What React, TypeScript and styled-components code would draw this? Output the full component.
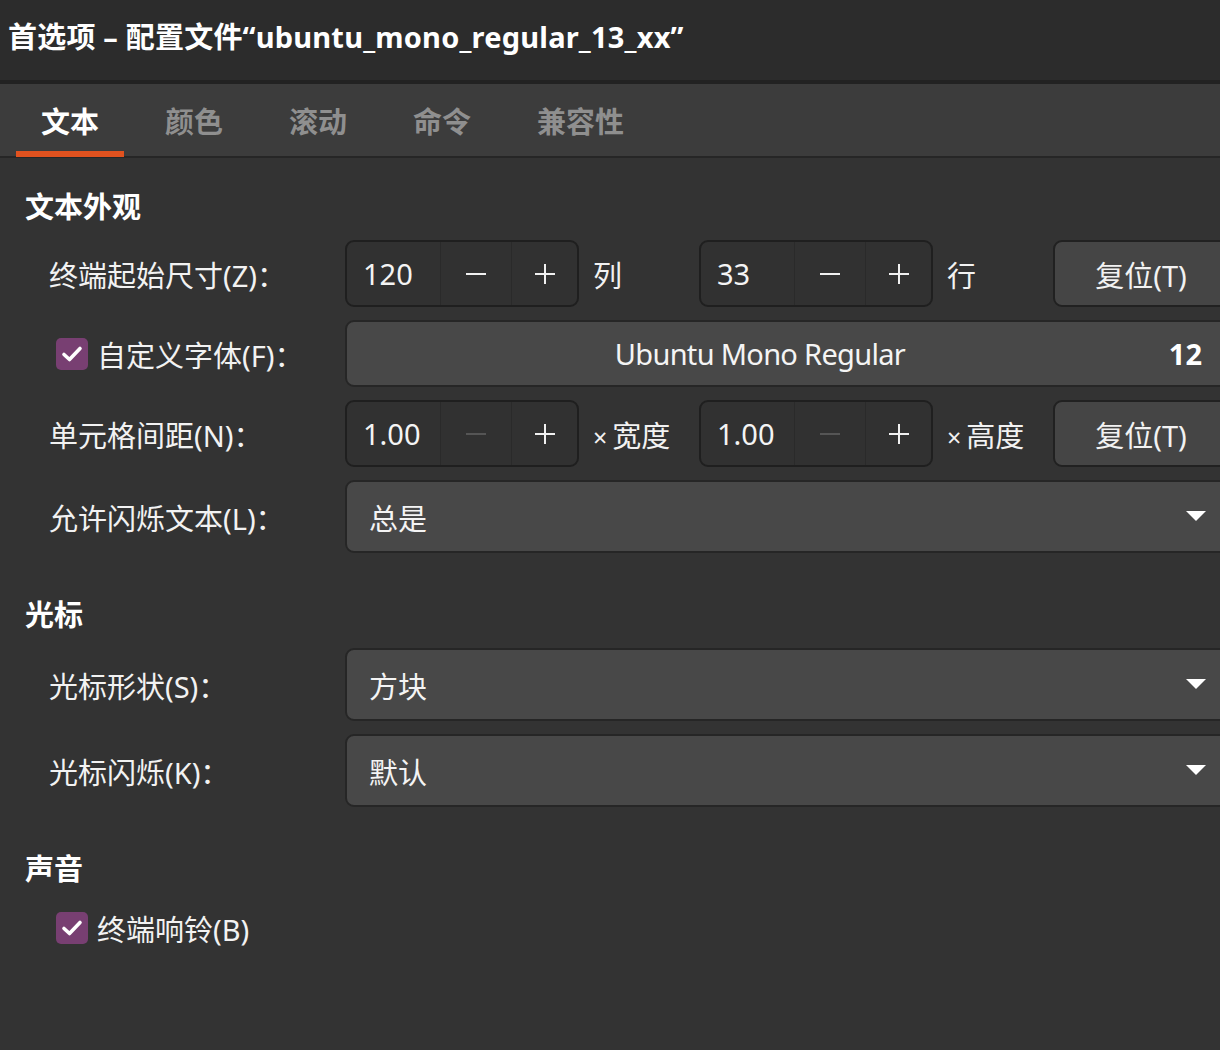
import React from "react";
import styled, { createGlobalStyle } from "styled-components";

const GlobalStyle = createGlobalStyle`
  html, body {
    margin: 0;
    padding: 0;
    background: #333333;
    overflow: hidden;
  }
  body {
    font-family: "Noto Sans", "Noto Sans CJK SC", sans-serif;
    color: #f2f2f2;
  }
  * { box-sizing: border-box; }
`;

const Window = styled.div`
  width: 1220px;
  height: 1050px;
  overflow: hidden;
  display: flex;
  flex-direction: column;
  background: #333333;
`;

const TitleBar = styled.header`
  height: 84px;
  flex: none;
  background: #2c2c2c;
  border-bottom: 4px solid #222222;
  display: flex;
  align-items: center;
  padding: 0 0 11px 8px;
  font-size: 29px;
  font-weight: 700;
  letter-spacing: 0.2px;
  color: #ffffff;
  white-space: nowrap;
`;

const TabBar = styled.nav`
  height: 74px;
  flex: none;
  background: #3c3c3c;
  border-bottom: 2px solid #262626;
  display: flex;
  padding-left: 16px;
  gap: 16px;
`;

const Tab = styled.div<{ $active?: boolean }>`
  position: relative;
  padding: 0 25px;
  display: flex;
  align-items: center;
  font-size: 29px;
  font-weight: 700;
  color: ${(p) => (p.$active ? "#ffffff" : "#8f8f8f")};
  &::after {
    content: "";
    display: ${(p) => (p.$active ? "block" : "none")};
    position: absolute;
    left: 0;
    right: 0;
    bottom: -1px;
    height: 6px;
    background: #e1521f;
  }
`;

const Content = styled.main`
  padding: 31px 0 0 25px;
  display: flex;
  flex-direction: column;
`;

const SectionTitle = styled.h2<{ $top?: number }>`
  margin: ${(p) => p.$top ?? 0}px 0 0 0;
  height: 36px;
  line-height: 36px;
  font-size: 29px;
  font-weight: 700;
  color: #ffffff;
`;

const Rows = styled.div<{ $top?: number }>`
  margin-top: ${(p) => p.$top ?? 15}px;
  display: flex;
  flex-direction: column;
  gap: 13px;
  padding-left: 24px;
`;

const FormRow = styled.div`
  display: grid;
  grid-template-columns: 296px 884px;
  align-items: center;
`;

const Label = styled.div`
  font-size: 29px;
  color: #f2f2f2;
  white-space: nowrap;
  display: flex;
  align-items: center;
`;

const CheckLabel = styled.label`
  display: flex;
  align-items: center;
  gap: 9px;
  margin-left: 7px;
  font-size: 29px;
  color: #f2f2f2;
  white-space: nowrap;
`;

const CheckBox = styled.span`
  width: 32px;
  height: 32px;
  border-radius: 5px;
  background: #783f72;
  display: flex;
  align-items: center;
  justify-content: center;
  flex: none;
`;

const SpinGroup = styled.div`
  display: grid;
  grid-template-columns: 234px 120px 234px 120px 176px;
  align-items: center;
`;

const SpinBox = styled.div`
  height: 67px;
  display: grid;
  grid-template-columns: 93px 71px 1fr;
  border: 2px solid #1f1f1f;
  border-radius: 9px;
  background: #313131;
`;

const SpinEntry = styled.div`
  display: flex;
  align-items: center;
  padding-left: 16px;
  font-size: 29px;
  color: #f4f4f4;
`;

const SpinBtn = styled.div`
  border-left: 1px solid #2a2a2a;
  display: flex;
  align-items: center;
  justify-content: center;
`;

const Unit = styled.div`
  padding-left: 14px;
  font-size: 29px;
  color: #f2f2f2;
  white-space: nowrap;
`;

const Times = styled.span`
  font-size: 25px;
  margin-right: 5px;
`;

const ResetButton = styled.button`
  height: 67px;
  width: 176px;
  border: 2px solid #212121;
  border-radius: 9px;
  background: #454545;
  color: #f2f2f2;
  font-family: inherit;
  font-size: 29px;
  padding: 0;
`;

const FontButton = styled.div`
  height: 67px;
  display: flex;
  align-items: center;
  border: 2px solid #262626;
  border-radius: 9px;
  background: #484848;
  padding: 0 25px 0 20px;
  font-size: 29px;
`;

const FontName = styled.span`
  flex: 1;
  text-align: center;
  letter-spacing: -0.7px;
  color: #f4f4f4;
`;

const FontSize = styled.span`
  font-weight: 700;
  color: #ffffff;
  margin-left: 16px;
`;

const Select = styled.div`
  height: 73px;
  display: flex;
  align-items: center;
  justify-content: space-between;
  border: 2px solid #262626;
  border-radius: 9px;
  background: #484848;
  padding: 0 21px 0 22px;
  font-size: 29px;
  color: #f4f4f4;
`;

const BellRow = styled.div`
  margin-top: 21px;
  padding-left: 24px;
  height: 40px;
  display: flex;
  align-items: center;
`;

const Minus = ({ dim }: { dim?: boolean }) => (
  <svg width="22" height="22" viewBox="0 0 22 22">
    <line x1="1" y1="11" x2="21" y2="11" stroke={dim ? "#555555" : "#f0f0f0"} strokeWidth="2" />
  </svg>
);

const Plus = () => (
  <svg width="22" height="22" viewBox="0 0 22 22">
    <line x1="1" y1="11" x2="21" y2="11" stroke="#f0f0f0" strokeWidth="2" />
    <line x1="11" y1="1" x2="11" y2="21" stroke="#f0f0f0" strokeWidth="2" />
  </svg>
);

const Check = () => (
  <svg width="26" height="26" viewBox="0 0 26 26">
    <path d="M5 13.5 L10.5 18.5 L21 7.5" fill="none" stroke="#ffffff" strokeWidth="3.6" strokeLinecap="round" strokeLinejoin="round" />
  </svg>
);

const Arrow = () => (
  <svg width="20" height="11" viewBox="0 0 20 11">
    <path d="M0 0 L20 0 L10 10 Z" fill="#ffffff" />
  </svg>
);

const Spin = ({ value, minDim }: { value: string; minDim?: boolean }) => (
  <SpinBox>
    <SpinEntry>{value}</SpinEntry>
    <SpinBtn>
      <Minus dim={minDim} />
    </SpinBtn>
    <SpinBtn>
      <Plus />
    </SpinBtn>
  </SpinBox>
);

export default function App() {
  return (
    <>
      <GlobalStyle />
      <Window>
        <TitleBar>首选项 – 配置文件“ubuntu_mono_regular_13_xx”</TitleBar>
        <TabBar>
          <Tab $active>文本</Tab>
          <Tab>颜色</Tab>
          <Tab>滚动</Tab>
          <Tab>命令</Tab>
          <Tab>兼容性</Tab>
        </TabBar>
        <Content>
          <SectionTitle>文本外观</SectionTitle>
          <Rows>
            <FormRow>
              <Label>终端起始尺寸(Z)：</Label>
              <SpinGroup>
                <Spin value="120" />
                <Unit>列</Unit>
                <Spin value="33" />
                <Unit>行</Unit>
                <ResetButton>复位(T)</ResetButton>
              </SpinGroup>
            </FormRow>
            <FormRow>
              <CheckLabel>
                <CheckBox>
                  <Check />
                </CheckBox>
                自定义字体(F)：
              </CheckLabel>
              <FontButton>
                <FontName>Ubuntu Mono Regular</FontName>
                <FontSize>12</FontSize>
              </FontButton>
            </FormRow>
            <FormRow>
              <Label>单元格间距(N)：</Label>
              <SpinGroup>
                <Spin value="1.00" minDim />
                <Unit>
                  <Times>×</Times>宽度
                </Unit>
                <Spin value="1.00" minDim />
                <Unit>
                  <Times>×</Times>高度
                </Unit>
                <ResetButton>复位(T)</ResetButton>
              </SpinGroup>
            </FormRow>
            <FormRow>
              <Label>允许闪烁文本(L)：</Label>
              <Select>
                <span>总是</span>
                <Arrow />
              </Select>
            </FormRow>
          </Rows>

          <SectionTitle $top={44}>光标</SectionTitle>
          <Rows>
            <FormRow>
              <Label>光标形状(S)：</Label>
              <Select>
                <span>方块</span>
                <Arrow />
              </Select>
            </FormRow>
            <FormRow>
              <Label>光标闪烁(K)：</Label>
              <Select>
                <span>默认</span>
                <Arrow />
              </Select>
            </FormRow>
          </Rows>

          <SectionTitle $top={44}>声音</SectionTitle>
          <BellRow>
            <CheckLabel>
              <CheckBox>
                <Check />
              </CheckBox>
              终端响铃(B)
            </CheckLabel>
          </BellRow>
        </Content>
      </Window>
    </>
  );
}
